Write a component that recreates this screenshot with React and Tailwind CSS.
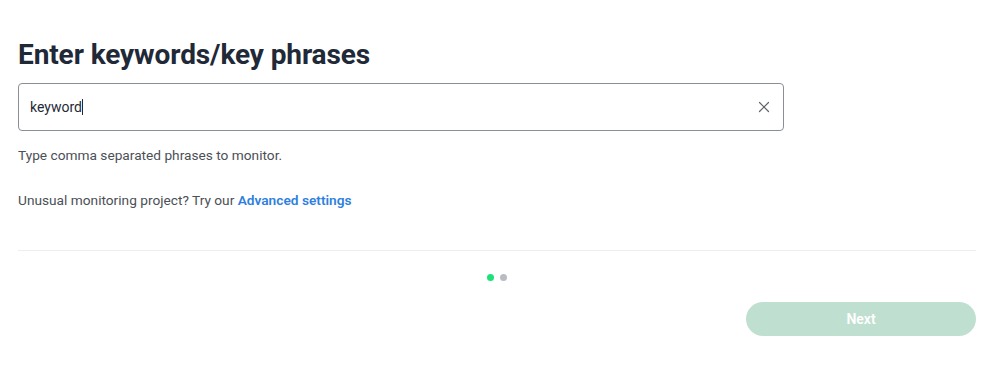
import { X } from 'lucide-react';

export default function App() {
  return (
    <div className="w-[1000px] h-[375px] bg-white px-[18px] pt-[38px]" style={{ fontFamily: 'Roboto, "Noto Sans", sans-serif' }}>
      <h1 className="text-[28px] leading-[34px] font-bold text-[#1f2937] tracking-[-0.1px]">Enter keywords/key phrases</h1>

      <div className="mt-[11px] w-[766px] h-[48px] border border-[#8a8f96] rounded-[4px] flex items-center pl-[11px] pr-[10px]">
        <span className="flex-1 text-[14px] text-[#1f2937]">keyword<span className="inline-block w-px h-[16px] bg-[#1f2937] align-middle -mt-[2px]" /></span>
        <X size={18} strokeWidth={1.6} className="text-[#5f6368]" />
      </div>

      <p className="mt-[15px] text-[13.7px] leading-[18px] text-[#4b4f56]">Type comma separated phrases to monitor.</p>
      <p className="mt-[27px] text-[13.7px] leading-[18px] text-[#4b4f56]">
        Unusual monitoring project? Try our <a className="text-[#2f7fe0] font-semibold">Advanced settings</a>
      </p>

      <div className="mt-[41px] w-[958px] h-px bg-[#eeeeee]" />

      <div className="w-[958px] flex justify-center gap-[6px] mt-[23px]">
        <span className="w-[7px] h-[7px] rounded-full bg-[#1de27a]" />
        <span className="w-[7px] h-[7px] rounded-full bg-[#b9bcc2]" />
      </div>

      <div className="w-[958px] flex justify-end mt-[21px]">
        <button className="w-[230px] h-[34px] rounded-full bg-[#bfe0d0] text-white text-[14px] font-semibold">Next</button>
      </div>
    </div>
  );
}
